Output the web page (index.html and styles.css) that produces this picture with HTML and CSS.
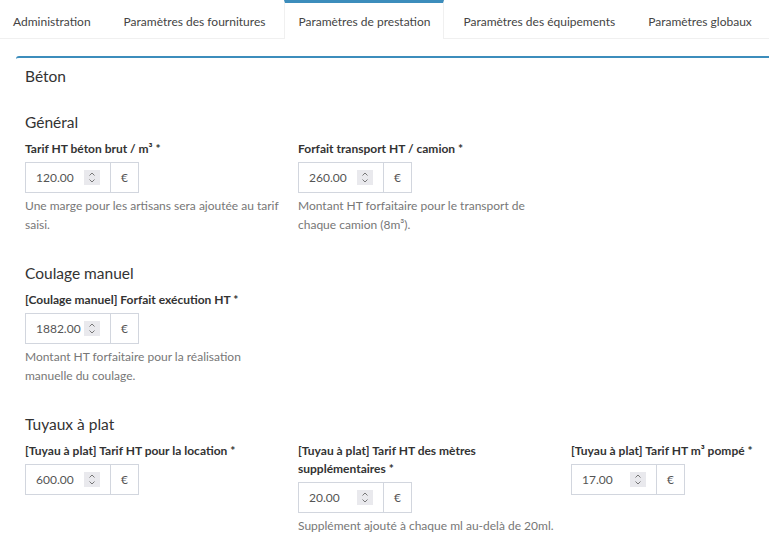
FILE: index.html
```html
<!DOCTYPE html>
<html lang="fr">
  <head>
    <meta charset="UTF-8" />
    <meta name="viewport" content="width=device-width, initial-scale=1.0" />
    <title>Paramètres de prestation</title>
    <link rel="stylesheet" href="styles.css">
  </head>
  <body>
    <div class="tabs-custom">
      <ul class="nav-tabs">
        <li><a href="#">Administration</a></li>
        <li><a href="#">Paramètres des fournitures</a></li>
        <li class="active"><a href="#">Paramètres de prestation</a></li>
        <li><a href="#">Paramètres des équipements</a></li>
        <li><a href="#">Paramètres globaux</a></li>
      </ul>

      <div class="tab-content">
        <div class="box">
          <h3 class="box-title">Béton</h3>

          <h4 class="section-title">Général</h4>
          <div class="row">
            <div class="field">
              <label>Tarif HT béton brut / m³ *</label>
              <div class="input-group">
                <div class="num-input"><span class="value">120.00</span><span class="spin"></span></div>
                <span class="addon">€</span>
              </div>
              <p class="help">Une marge pour les artisans sera ajoutée au tarif saisi.</p>
            </div>
            <div class="field">
              <label>Forfait transport HT / camion *</label>
              <div class="input-group">
                <div class="num-input"><span class="value">260.00</span><span class="spin"></span></div>
                <span class="addon">€</span>
              </div>
              <p class="help">Montant HT forfaitaire pour le transport de chaque camion (8m³).</p>
            </div>
          </div>

          <h4 class="section-title">Coulage manuel</h4>
          <div class="row">
            <div class="field">
              <label>[Coulage manuel] Forfait exécution HT *</label>
              <div class="input-group">
                <div class="num-input"><span class="value">1882.00</span><span class="spin"></span></div>
                <span class="addon">€</span>
              </div>
              <p class="help">Montant HT forfaitaire pour la réalisation manuelle du coulage.</p>
            </div>
          </div>

          <h4 class="section-title">Tuyaux à plat</h4>
          <div class="row">
            <div class="field">
              <label>[Tuyau à plat] Tarif HT pour la location *</label>
              <div class="input-group">
                <div class="num-input"><span class="value">600.00</span><span class="spin"></span></div>
                <span class="addon">€</span>
              </div>
            </div>
            <div class="field">
              <label>[Tuyau à plat] Tarif HT des mètres supplémentaires *</label>
              <div class="input-group">
                <div class="num-input"><span class="value">20.00</span><span class="spin"></span></div>
                <span class="addon">€</span>
              </div>
              <p class="help">Supplément ajouté à chaque ml au-delà de 20ml.</p>
            </div>
            <div class="field">
              <label>[Tuyau à plat] Tarif HT m³ pompé *</label>
              <div class="input-group">
                <div class="num-input"><span class="value">17.00</span><span class="spin"></span></div>
                <span class="addon">€</span>
              </div>
            </div>
          </div>
        </div>
      </div>
    </div>
  </body>
</html>
```

FILE: styles.css
```css
body, html {
    margin: 0;
    padding: 0;
    background-color: #fff;
    overflow: hidden;
    font-family: Lato, "Liberation Sans", sans-serif;
    font-size: 12px;
    color: #333;
}

/* Tabs */

.nav-tabs {
    display: flex;
    margin: 0;
    padding: 0;
    list-style: none;
    border-bottom: 1px solid #f0f0f0;
    white-space: nowrap;
}

.nav-tabs li {
    margin-right: 5px;
    margin-bottom: -1px;
    border-top: 3px solid transparent;
    border-left: 1px solid transparent;
    border-right: 1px solid transparent;
}

.nav-tabs li:first-child {
    border-left: 0;
}

.nav-tabs li.active {
    border-top-color: #3c8dbc;
    border-left-color: #f0f0f0;
    border-right-color: #f0f0f0;
    background-color: #fff;
}

.nav-tabs a {
    display: block;
    padding: 1px 13px 0 13px;
    height: 35px;
    line-height: 35px;
    color: #444;
    text-decoration: none;
}

/* Content box */

.tab-content {
    padding: 17px 0 0 16px;
}

.box {
    border-top: 2px solid #3c8dbc;
    border-radius: 3px 0 0 0;
    padding: 7px 0 0 9px;
}

.box-title {
    margin: 0 0 25px 0;
    font-size: 15.5px;
    line-height: 22px;
    font-weight: 400;
}

.section-title {
    margin: 0 0 7px 0;
    font-size: 15.5px;
    line-height: 20px;
    font-weight: 400;
}

.row {
    display: flex;
    align-items: flex-start;
    margin-bottom: 29px;
}

.field {
    flex: 0 0 258px;
    width: 258px;
    margin-right: 15px;
}

.field label {
    display: block;
    font-size: 12px;
    font-weight: 700;
    line-height: 18px;
    margin-top: 1px;
    margin-bottom: 4px;
}

/* Input with addon */

.input-group {
    display: flex;
    width: 114px;
    height: 31px;
    border: 1px solid #d2d6de;
    box-sizing: border-box;
}

.num-input {
    position: relative;
    width: 85px;
    border-right: 1px solid #d2d6de;
    color: #555;
    font-size: 12px;
    line-height: 29px;
    padding-left: 10px;
    box-sizing: border-box;
}

.spin {
    position: absolute;
    top: 7px;
    right: 10px;
    width: 16px;
    height: 15px;
    background-color: #e9e9ed;
    background-image:
        url("data:image/svg+xml,%3Csvg xmlns='http://www.w3.org/2000/svg' width='16' height='15' viewBox='0 0 16 15'%3E%3Cpath d='M5.5 5.5 8 3l2.5 2.5M5.5 9.5 8 12l2.5-2.5' fill='none' stroke='%23777' stroke-width='1'/%3E%3C/svg%3E");
}

.addon {
    flex: 1;
    text-align: center;
    color: #555;
    font-size: 12px;
    line-height: 29px;
}

.help {
    margin: 3px 0 0 0;
    font-size: 12px;
    line-height: 19px;
    color: #777;
}
```
